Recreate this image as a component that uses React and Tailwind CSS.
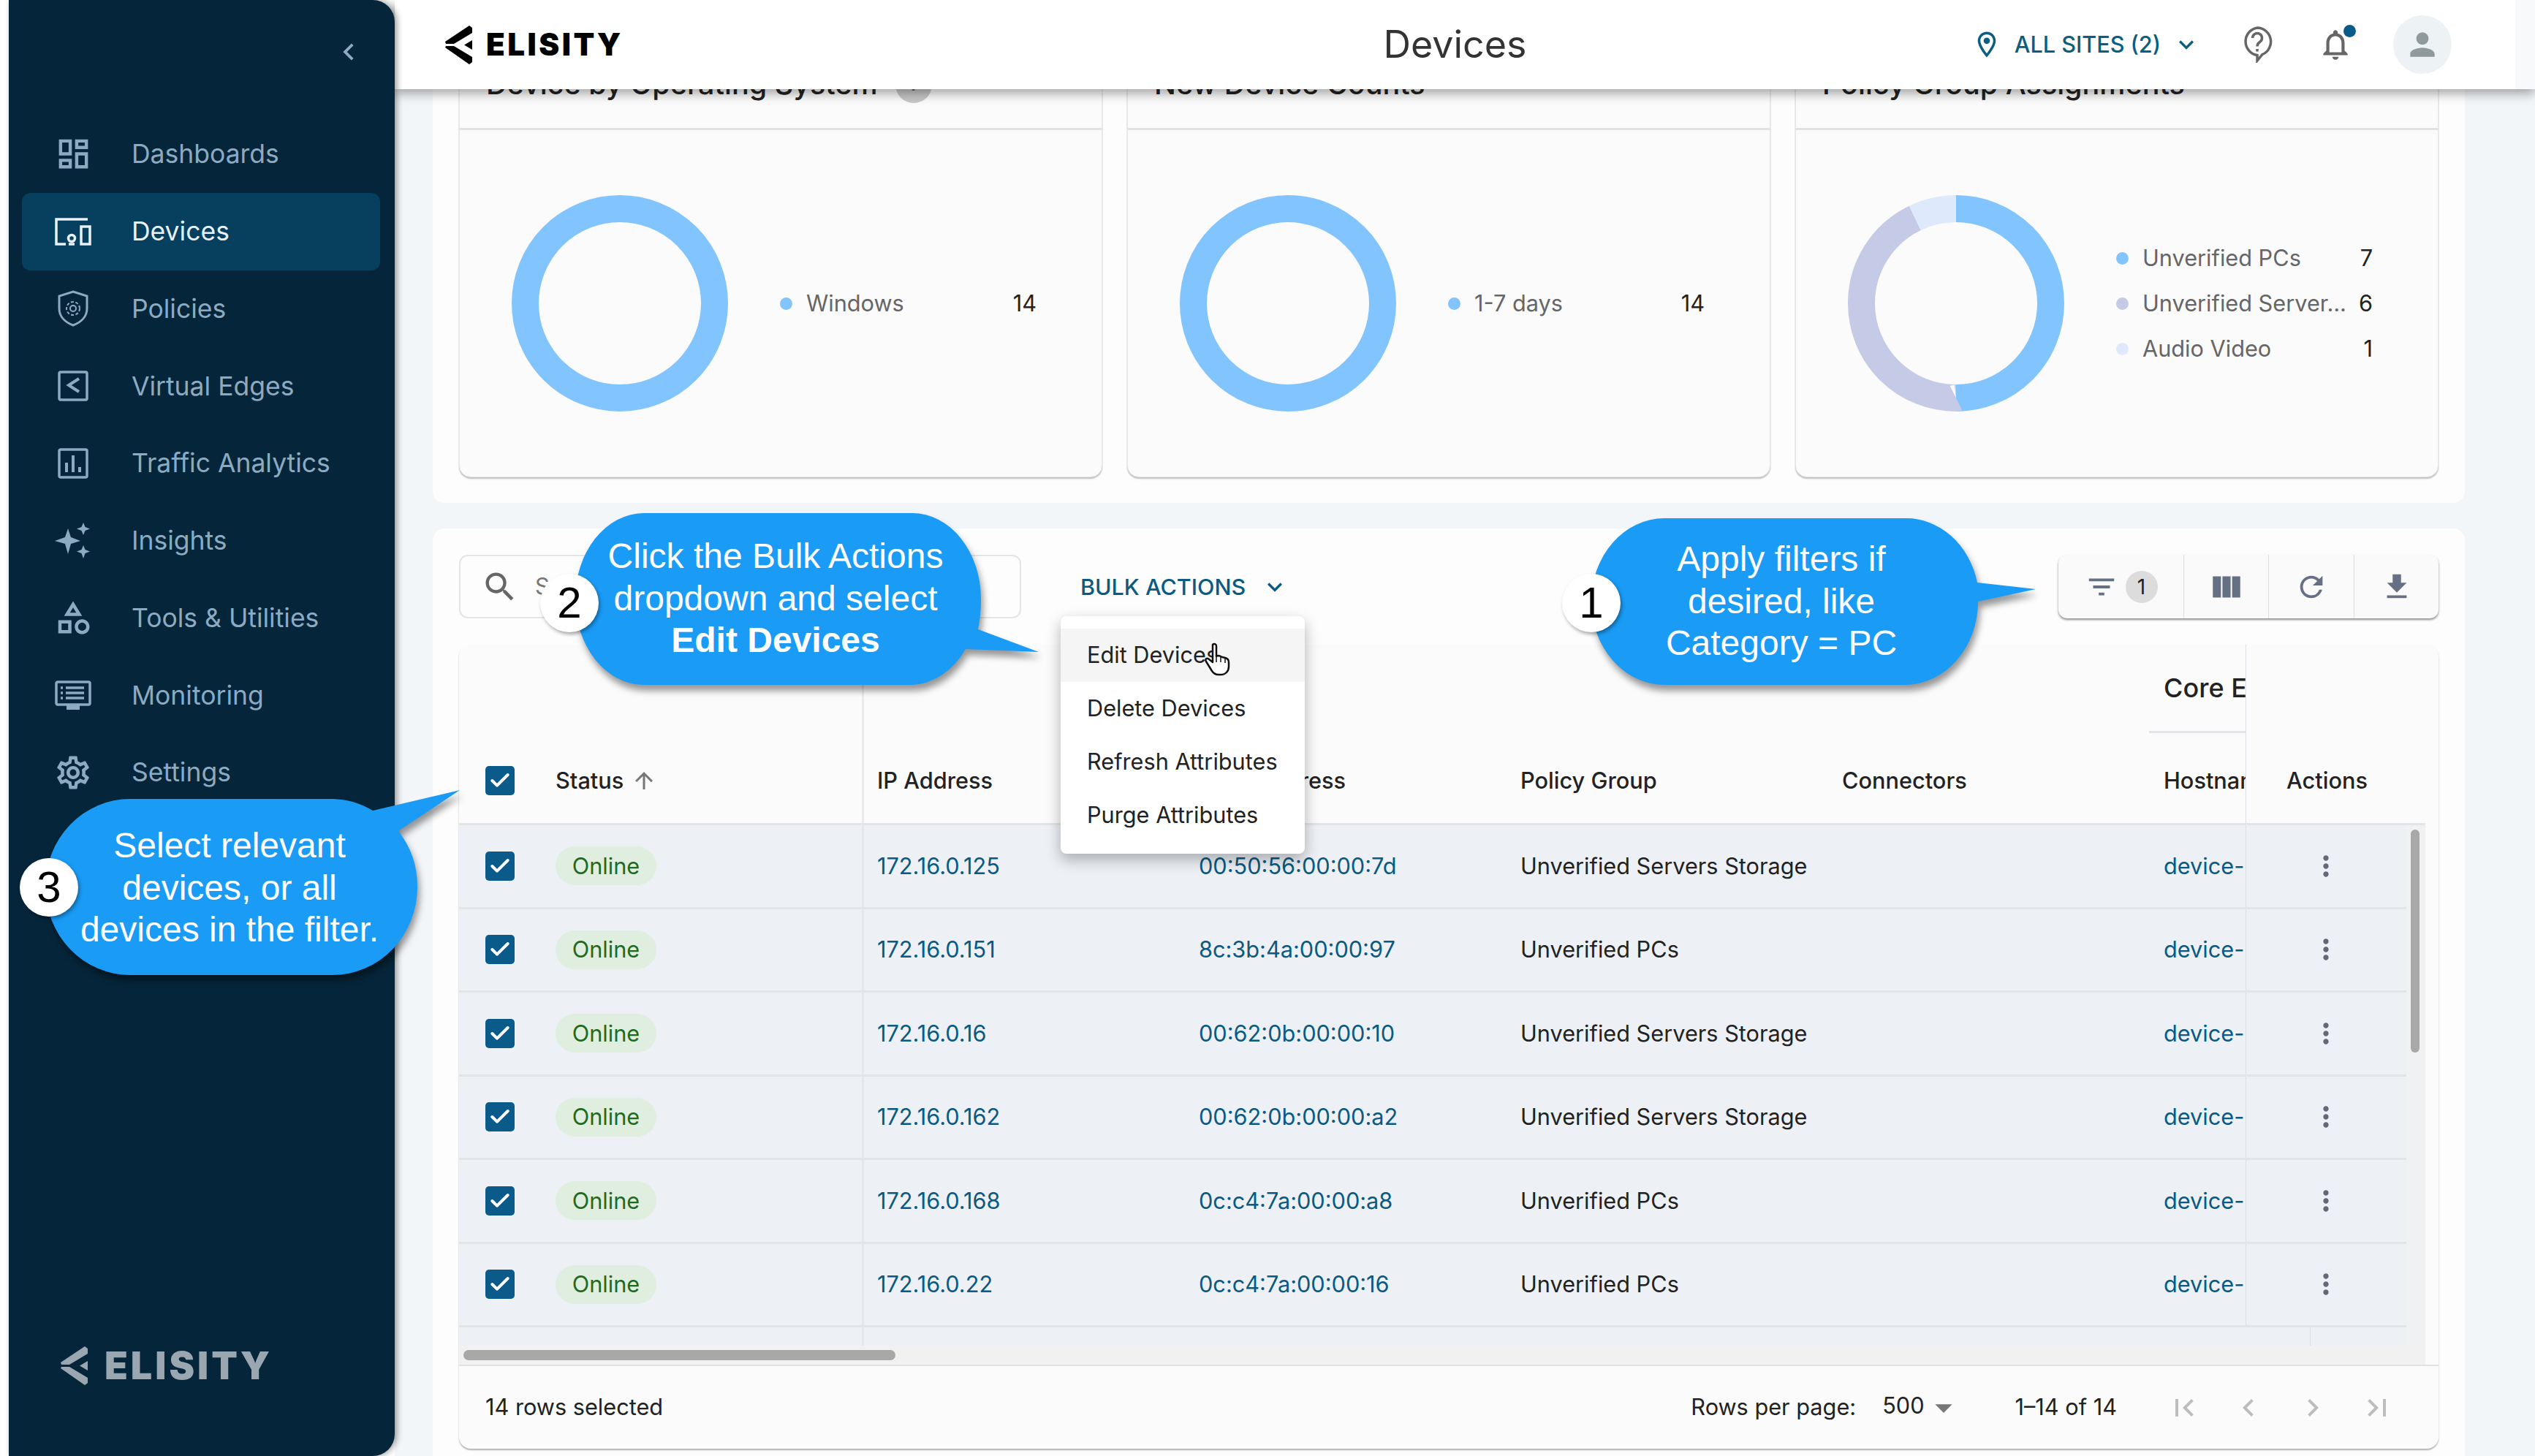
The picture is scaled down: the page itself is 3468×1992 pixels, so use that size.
import React from "react";
import {
  MdOutlineDashboard,
  MdOutlineCategory,
  MdOutlineSettings,
  MdOutlineSearch,
  MdRefresh,
  MdFileDownload,
  MdViewColumn,
  MdFilterList,
  MdMoreVert,
  MdArrowUpward,
  MdOutlineLocationOn,
  MdFirstPage,
  MdLastPage,
  MdChevronLeft,
  MdChevronRight,
  MdOutlineNotifications,
  MdPerson,
  MdArrowDropDown,
  MdKeyboardArrowDown,
} from "react-icons/md";
import { Check } from "lucide-react";

const DevicesIcon = () => (
  <svg width="50" height="38" viewBox="0 0 50 38" fill="none" stroke="currentColor" strokeWidth="3.5">
    <path d="M45 2H2v34h13" />
    <circle cx="23" cy="28" r="4.5" />
    <path d="M19 36h8" />
    <rect x="36" y="12" width="12" height="24" />
  </svg>
);

const ShieldIcon = () => (
  <svg width="42" height="50" viewBox="0 0 42 50" fill="none" stroke="currentColor" strokeWidth="3">
    <path d="M21 2L40 8v17c0 11-8 19-19 23C10 44 2 36 2 25V8z" />
    <circle cx="21" cy="25" r="4" strokeWidth="2" />
    <circle cx="21" cy="25" r="9" strokeWidth="2" strokeDasharray="4 2.5" />
  </svg>
);

const EdgeIcon = () => (
  <svg width="42" height="42" viewBox="0 0 42 42" fill="none" stroke="currentColor" strokeWidth="3.5">
    <rect x="2" y="2" width="38" height="38" rx="2" />
    <path d="M29 11L15 20l14 9" strokeWidth="4" />
  </svg>
);

const TrafficIcon = () => (
  <svg width="42" height="42" viewBox="0 0 42 42" fill="none" stroke="currentColor" strokeWidth="3.5">
    <rect x="2" y="2" width="38" height="38" rx="2" />
    <path d="M12 20v13M21 10v23M30 26v7" strokeWidth="4" />
  </svg>
);

const SparkleIcon = () => (
  <svg width="50" height="50" viewBox="0 0 50 50" fill="currentColor">
    <path d="M18 8l4 12 13 5-13 4-4 14-4-14L0 25l14-5z" />
    <path d="M39 0l2.500 6 6.500 2.500-6.500 2.500L39 17l-2.500-6-6.500-2.500L36.500 6z" />
    <path d="M39 31l2.500 6 6.500 2.500-6.500 2.500L39 49l-2.500-7-6.500-2.500 6.500-2.500z" />
  </svg>
);

const MonitorIcon = () => (
  <svg width="50" height="40" viewBox="0 0 50 40" fill="none" stroke="currentColor" strokeWidth="3.500">
    <rect x="2" y="2" width="46" height="31" rx="2" />
    <path d="M15 10h25M15 17h25M15 24h25M8 10h3M8 17h3M8 24h3" />
    <path d="M16 37h18" strokeWidth="6" />
  </svg>
);

const LogoMark = ({ className }) => (
  <svg className={className} viewBox="0 0 37 53" fill="currentColor">
    <polygon points="33,0 37,3 37,10 12,25 1,25 0,22" />
    <polygon points="37,20 37,33 26,26.500" />
    <polygon points="0,30 1,28 12,28 37,43 37,50 33,53" />
  </svg>
);

const HelpIcon = () => (
  <svg width="42" height="50" viewBox="0 0 42 50" fill="none" stroke="#666" strokeWidth="3.500">
    <path d="M21 2a19 19 0 0 1 7 36.500L21 47v-7.500A19 19 0 0 1 21 2z" />
    <path d="M14.500 16a6.500 6.500 0 1 1 10 5.500c-2.500 1.700-3.500 3-3.500 6" />
    <path d="M21 31v3.500" />
  </svg>
);

const navItems = [
  { label: "Dashboards", icon: <MdOutlineDashboard size={53} /> },
  { label: "Devices", icon: <DevicesIcon />, active: true },
  { label: "Policies", icon: <ShieldIcon /> },
  { label: "Virtual Edges", icon: <EdgeIcon /> },
  { label: "Traffic Analytics", icon: <TrafficIcon /> },
  { label: "Insights", icon: <SparkleIcon /> },
  { label: "Tools & Utilities", icon: <MdOutlineCategory size={54} /> },
  { label: "Monitoring", icon: <MonitorIcon /> },
  { label: "Settings", icon: <MdOutlineSettings size={54} /> },
];

const rows = [
  ["172.16.0.125", "00:50:56:00:00:7d", "Unverified Servers Storage"],
  ["172.16.0.151", "8c:3b:4a:00:00:97", "Unverified PCs"],
  ["172.16.0.16", "00:62:0b:00:00:10", "Unverified Servers Storage"],
  ["172.16.0.162", "00:62:0b:00:00:a2", "Unverified Servers Storage"],
  ["172.16.0.168", "0c:c4:7a:00:00:a8", "Unverified PCs"],
  ["172.16.0.22", "0c:c4:7a:00:00:16", "Unverified PCs"],
];

const cards = [
  {
    title: "Device by Operating System",
    info: true,
    segments: [{ color: "#82c4fd", len: 100, offset: 0 }],
    legend: [{ color: "#82c4fd", label: "Windows", value: 14 }],
  },
  {
    title: "New Device Counts",
    segments: [{ color: "#82c4fd", len: 100, offset: 0 }],
    legend: [{ color: "#82c4fd", label: "1-7 days", value: 14 }],
  },
  {
    title: "Policy Group Assignments",
    segments: [
      { color: "#82c4fd", len: 50, offset: 0 },
      { color: "#c5cae6", len: 42.86, offset: -50 },
      { color: "#deeafc", len: 7.14, offset: -92.86 },
    ],
    legend: [
      { color: "#82c4fd", label: "Unverified PCs", value: 7 },
      { color: "#c5cae6", label: "Unverified Server...", value: 6 },
      { color: "#deeafc", label: "Audio Video", value: 1 },
    ],
  },
];

const Donut = ({ segments }) => (
  <svg width="296" height="296" viewBox="0 0 296 296" className="shrink-0 -rotate-90">
    {segments.map((s, i) => (
      <circle
        key={i}
        cx="148"
        cy="148"
        r="129.500"
        fill="none"
        stroke={s.color}
        strokeWidth="37"
        pathLength="100"
        strokeDasharray={`${s.len} ${100 - s.len}`}
        strokeDashoffset={s.offset}
      />
    ))}
  </svg>
);

const ChartCard = ({ card }) => (
  <div className="w-[880px] rounded-b-[16px] border border-[#e6e6e6] bg-[#fbfbfb] shadow-[0_2px_2px_rgba(0,0,0,0.25)]">
    <div className="flex h-[121px] items-center gap-[24px] border-b-[3px] border-[#e2e2e2] pl-[36px]">
      <span className="whitespace-nowrap text-[39.5px] font-medium text-[#222]">{card.title}</span>
      {card.info && (
        <span className="flex h-[50px] w-[50px] items-center justify-center rounded-full bg-[#c8c8c8] text-[24px] font-bold text-[#666]">
          i
        </span>
      )}
    </div>
    <div className="flex h-[474px] items-center pl-[71px]">
      <Donut segments={card.segments} />
      <div className="ml-[71px] flex w-[351px] flex-col gap-[44px] text-[30.7px]">
        {card.legend.map((l) => (
          <div key={l.label} className="flex h-[18px] items-center">
            <span className="h-[17px] w-[17px] rounded-full" style={{ background: l.color }} />
            <span className="ml-[19px] flex-1 whitespace-nowrap text-[#666]">{l.label}</span>
            <span className="text-[#222]">{l.value}</span>
          </div>
        ))}
      </div>
    </div>
  </div>
);

const Checkbox = () => (
  <div className="flex h-[40px] w-[40px] items-center justify-center rounded-[5px] bg-[#0a5a8a]">
    <Check size={32} color="white" strokeWidth={3} />
  </div>
);

const Sidebar = () => (
  <aside className="relative z-20 flex h-full w-[528px] shrink-0 flex-col rounded-r-[30px] bg-[#05263a] shadow-[3px_0_8px_rgba(0,0,0,0.4)]">
    <div className="flex h-[158px] justify-end pr-[42px] pt-[48px]">
      <MdChevronLeft size={46} color="#8cabc2" className="mr-[-2px]" />
    </div>
    <nav className="flex flex-col pl-[18px] pr-[20px]">
      {navItems.map((item) => (
        <div
          key={item.label}
          className={`flex h-[105.75px] items-center rounded-[12px] pl-[20px] text-[35.5px] ${
            item.active ? "bg-[#073f5f] text-[#e8f1f8]" : "text-[#8cabc2]"
          }`}
        >
          <span className="flex w-[100px] justify-center">{item.icon}</span>
          <span className="ml-[30px]">{item.label}</span>
        </div>
      ))}
    </nav>
    <div className="mb-[97px] ml-[71px] mt-auto flex items-center gap-[23px] text-[#9aa6b0]">
      <LogoMark className="h-[53px] w-[37px]" />
      <span className="text-[52px] font-black leading-none tracking-[4px]">ELISITY</span>
    </div>
  </aside>
);

const Header = () => (
  <div className="relative z-10 h-[122px] shrink-0 bg-[#f7f9fb] shadow-[0_6px_14px_rgba(0,0,0,0.35)]">
    <header className="grid h-full w-[2901px] grid-cols-3 items-center bg-white px-[69px]">
      <div className="flex items-center gap-[19px] text-black">
        <LogoMark className="h-[53px] w-[37px]" />
        <span className="text-[42px] font-black leading-none tracking-[3.5px]">ELISITY</span>
      </div>
      <div className="text-center text-[52px] text-[#333]">Devices</div>
      <div className="mr-[18px] flex items-center justify-end">
        <MdOutlineLocationOn size={42} color="#0b5e80" />
        <span className="ml-[17px] whitespace-nowrap text-[30.6px] font-medium text-[#0b5e80]">ALL SITES (2)</span>
        <MdKeyboardArrowDown size={40} color="#0b5e80" className="ml-[15px]" />
        <span className="ml-[56px] flex"><HelpIcon /></span>
        <MdOutlineNotifications size={50} color="#666" className="ml-[61px]" />
        <span className="-ml-[14px] -mt-[38px] h-[17px] w-[17px] rounded-full bg-[#0a5a8a]" />
        <span className="ml-[51px] flex h-[80px] w-[80px] items-center justify-center rounded-full bg-[#edf2f5]">
          <MdPerson size={50} color="#909a9c" />
        </span>
      </div>
    </header>
  </div>
);

const Toolbar = () => (
  <div className="flex h-[87px] items-center">
    <div className="flex h-[87px] w-[769px] items-center rounded-[12px] border-2 border-[#e5e5e5] pl-[28px]">
      <MdOutlineSearch size={52} color="#666" />
      <span className="ml-[22px] text-[30.7px] text-[#777]">Search</span>
    </div>
    <div className="ml-[81px] flex items-center text-[#0a5a82]">
      <span className="text-[30.5px] font-medium">BULK ACTIONS</span>
      <MdKeyboardArrowDown size={40} className="ml-[20px]" />
    </div>
    <div className="ml-auto flex h-[87px] w-[520px] items-center rounded-[12px] bg-[#fafafa] text-[#667085] shadow-[0_2px_3px_rgba(0,0,0,0.45)]">
      <div className="flex h-full w-[172px] items-center justify-center gap-[10px] border-r border-[#dedede]">
        <MdFilterList size={46} />
        <span className="flex h-[44px] w-[44px] items-center justify-center rounded-full bg-[#dcdcdc] text-[28px] text-[#222]">1</span>
      </div>
      <div className="flex h-full w-[116px] items-center justify-center border-r border-[#dedede]">
        <MdViewColumn size={50} />
      </div>
      <div className="flex h-full w-[117px] items-center justify-center border-r border-[#dedede]">
        <MdRefresh size={46} />
      </div>
      <div className="flex h-full flex-1 items-center justify-center">
        <MdFileDownload size={46} />
      </div>
    </div>
  </div>
);

const TableHead = () => (
  <div className="flex h-[247px] shrink-0 border-b-[3px] border-[#e2e4e8] text-[30.7px] font-medium text-[#222]">
    <div className="flex w-[551px] items-end pb-[35px] pl-[36px]">
      <div className="flex h-[46px] items-center">
        <Checkbox />
        <span className="ml-[56px]">Status</span>
        <MdArrowUpward size={36} color="#777" className="ml-[10px]" />
      </div>
    </div>
    <div className="flex w-[441px] items-end border-l-[3px] border-[#e9ebee] pb-[35px] pl-[18px]">IP Address</div>
    <div className="flex w-[440px] items-end pb-[35px] pl-[20px]">MAC Address</div>
    <div className="flex w-[440px] items-end pb-[35px] pl-[20px]">Policy Group</div>
    <div className="flex w-[440px] items-end pb-[35px] pl-[20px]">Connectors</div>
    <div className="flex w-[132px] flex-col overflow-hidden">
      <div className="flex h-[121px] items-center whitespace-nowrap border-b-[3px] border-[#e2e4e8] pl-[20px] text-[36px]">Core Edge</div>
      <div className="flex flex-1 items-end whitespace-nowrap pb-[35px] pl-[20px]">Hostname</div>
    </div>
    <div className="flex flex-1 items-end border-l border-[#dcdfe3] pb-[35px] pl-[55px]">Actions</div>
  </div>
);

const TableRow = ({ row }) => (
  <div className="flex h-[114.5px] shrink-0 items-center border-b-[3px] border-[#e2e4e8] text-[30.7px] text-[#222]">
    <div className="flex w-[551px] items-center pl-[36px]">
      <Checkbox />
      <span className="ml-[56px] flex h-[53px] w-[138px] items-center justify-center rounded-full bg-[#e0eee0] text-[#1e6b1e]">
        Online
      </span>
    </div>
    <div className="flex h-full w-[441px] items-center border-l-[3px] border-[#e4e7eb] pl-[18px] text-[#0a5a82]">{row[0]}</div>
    <div className="w-[440px] pl-[20px] text-[#0a5a82]">{row[1]}</div>
    <div className="w-[440px] pl-[20px]">{row[2]}</div>
    <div className="w-[440px]" />
    <div className="w-[132px] overflow-hidden whitespace-nowrap pl-[20px] text-[#0a5a82]">device-</div>
    <div className="flex h-full flex-1 items-center border-l border-[#dcdfe3] pl-[87px]">
      <MdMoreVert size={44} color="#667" />
    </div>
  </div>
);

const DeviceTable = () => (
  <div className="mt-[36px] flex h-[1100px] flex-col rounded-[16px] bg-[#fbfbfb] shadow-[0_2px_2px_rgba(0,0,0,0.3)]">
    <div className="flex w-[2690px] flex-1 flex-col">
      <TableHead />
      <div className="flex h-[712px] overflow-hidden bg-[#f0f1f3]">
        <div className="w-[2664px] shrink-0 bg-[#edf1f6]">
          {rows.map((r) => (
            <TableRow key={r[0]} row={r} />
          ))}
          <div className="flex h-[27px]">
            <div className="w-[551px]" />
            <div className="w-[1981px] border-l-[3px] border-[#e4e7eb]" />
            <div className="border-l border-[#dcdfe3]" />
          </div>
        </div>
        <div className="flex-1 pl-[6px] pt-[6px]">
          <div className="h-[305px] w-[12px] rounded-full bg-[#a8a8a8]" />
        </div>
      </div>
      <div className="h-[26px] shrink-0 bg-[#f1f1f1] pl-[6px] pt-[6px]">
        <div className="h-[14px] w-[591px] rounded-full bg-[#a8a8a8]" />
      </div>
    </div>
    <div className="flex h-[115px] shrink-0 items-center border-t-2 border-[#e2e2e2] pl-[36px] pr-[60px] text-[30.7px] text-[#222]">
      <span>14 rows selected</span>
      <span className="ml-auto">Rows per page:</span>
      <span className="ml-[36px] -mt-[4px]">500</span>
      <MdArrowDropDown size={56} color="#777" className="-ml-[2px]" />
      <span className="ml-[70px]">1–14 of 14</span>
      <div className="ml-[68px] flex text-[#bdbdbd]">
        <MdFirstPage size={48} className="mr-[40px]" />
        <MdChevronLeft size={48} className="mr-[40px]" />
        <MdChevronRight size={48} className="mr-[40px]" />
        <MdLastPage size={48} />
      </div>
    </div>
  </div>
);

const BulkMenu = () => (
  <div className="absolute left-[1451px] top-[843px] z-30 flex h-[325px] w-[334px] flex-col rounded-[8px] bg-white py-[17px] text-[30.7px] text-[#222] shadow-[0_8px_20px_rgba(0,0,0,0.3)]">
    {["Edit Devices", "Delete Devices", "Refresh Attributes", "Purge Attributes"].map((t, i) => (
      <div key={t} className={`flex h-[73px] items-center pl-[36px] ${i === 0 ? "bg-[#f5f5f5]" : ""}`}>
        {t}
      </div>
    ))}
    <svg className="absolute left-[195px] top-[36px]" width="38" height="46" viewBox="0 0 38 46" fill="white" stroke="#111" strokeWidth="2.500" strokeLinejoin="round">
      <path d="M13 3c2-2 5-1 5 2v14l2-1 3 .5 3 1.500 4 1c4 1 5 3 5 6v6c0 6-4 11-11 11h-3c-5 0-7-2-9-5L4 26c-2-3 1-6 4-3l5 4V5z" />
      <path d="M18 18v9M24 20v7M30 22v6" strokeWidth="1.500" />
    </svg>
  </div>
);

const Badge = ({ className, children }) => (
  <div className={`absolute z-50 flex h-[80px] w-[80px] items-center justify-center rounded-full bg-white text-[60px] leading-none text-black shadow-[2px_3px_5px_rgba(0,0,0,0.35)] ${className}`}>
    {children}
  </div>
);

const bubbleText = "absolute z-50 whitespace-nowrap text-center text-[48px] leading-[57.5px] text-white";

const Callouts = () => (
  <div className="font-['Liberation_Sans',sans-serif]">
    {/* Apply filters */}
    <svg className="absolute left-[2177px] top-[709px] z-40 overflow-visible drop-shadow-[3px_8px_5px_rgba(0,0,0,0.4)]" width="608" height="228" viewBox="2177 709 608 228">
      <path d="M2277 709H2606A100 114 0 0 1 2705 797L2785 806L2706 823A100 114 0 0 1 2606 937H2277A100 114 0 0 1 2177 823A100 114 0 0 1 2277 709Z" fill="#1a9bf5" />
    </svg>
    <div className={`${bubbleText} left-[2177px] top-[736px] w-[520px]`}>
      Apply filters if
      <br />
      desired, like
      <br />
      Category = PC
    </div>
    <Badge className="left-[2137px] top-[785px]">1</Badge>

    {/* Bulk actions */}
    <svg className="absolute left-[787px] top-[702px] z-40 overflow-visible drop-shadow-[3px_8px_5px_rgba(0,0,0,0.4)]" width="634" height="235" viewBox="787 702 634 235">
      <path d="M880 702H1248A94 117.500 0 0 1 1342 819.500Q1342 842 1338 861L1421 892L1321 888A94 117.500 0 0 1 1248 937H880A94 117.500 0 0 1 787 819.500A94 117.500 0 0 1 880 702Z" fill="#1a9bf5" />
    </svg>
    <div className={`${bubbleText} left-[787px] top-[732px] w-[548px]`}>
      Click the Bulk Actions
      <br />
      dropdown and select
      <br />
      <b>Edit Devices</b>
    </div>
    <Badge className="left-[739px] top-[785px]">2</Badge>

    {/* Select devices */}
    <svg className="absolute left-[62px] top-[1081px] z-40 overflow-visible drop-shadow-[3px_8px_5px_rgba(0,0,0,0.4)]" width="567" height="253" viewBox="62 1081 567 253">
      <path d="M178 1093H455A116 120.500 0 0 1 510 1109L629 1081L545 1137A116 120.500 0 0 1 571 1213.500A116 120.500 0 0 1 455 1334H178A116 120.500 0 0 1 62 1213.500A116 120.500 0 0 1 178 1093Z" fill="#1a9bf5" />
    </svg>
    <div className={`${bubbleText} left-[62px] top-[1128px] w-[504px]`}>
      Select relevant
      <br />
      devices, or all
      <br />
      devices in the filter.
    </div>
    <Badge className="left-[27px] top-[1174px]">3</Badge>
  </div>
);

const App = () => (
  <div className="relative flex h-[1992px] w-[3468px] overflow-hidden bg-white font-['Inter',sans-serif]">
    <div className="w-[12px] shrink-0" />
    <Sidebar />
    <div className="flex min-w-0 flex-1 flex-col bg-[#f3f6f9]">
      <Header />
      <div className="-mt-[100px] ml-[52px] flex w-[2780px] shrink-0 flex-col">
        <section className="flex h-[666px] shrink-0 items-end justify-between rounded-b-[16px] bg-[#fdfdfd] px-[36px] pb-[35px]">
          {cards.map((c) => (
            <ChartCard key={c.title} card={c} />
          ))}
        </section>
        <section className="mt-[35px] rounded-t-[16px] bg-[#fdfdfd] p-[36px] pb-[10px]">
          <Toolbar />
          <DeviceTable />
        </section>
      </div>
    </div>
    <BulkMenu />
    <Callouts />
  </div>
);

export default App;
